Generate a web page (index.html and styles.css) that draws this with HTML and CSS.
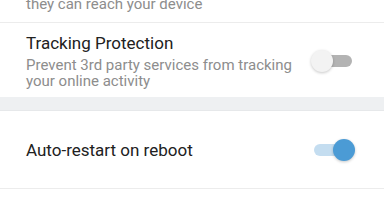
FILE: index.html
```html
<!DOCTYPE html>
<html>
<head>
<meta charset="utf-8">
<link rel="stylesheet" href="styles.css">
</head>
<body>
<div class="list">
  <div class="item partial">
    <div class="summary cut">they can reach your device</div>
  </div>
  <div class="item two-line">
    <div class="text">
      <div class="title">Tracking Protection</div>
      <div class="summary">Prevent 3rd party services from tracking<br>your online activity</div>
    </div>
    <div class="switch off"><span class="track"></span><span class="knob"></span></div>
  </div>
  <div class="band"></div>
  <div class="item single">
    <div class="text">
      <div class="title">Auto-restart on reboot</div>
    </div>
    <div class="switch on"><span class="track"></span><span class="knob"></span></div>
  </div>
</div>
</body>
</html>
```
FILE: styles.css
```css
html, body {
  margin: 0;
  padding: 0;
  background: #ffffff;
  font-family: Roboto, "Noto Sans", sans-serif;
  width: 384px;
  height: 216px;
  overflow: hidden;
}
.list {
  display: flex;
  flex-direction: column;
}
.item {
  display: flex;
  align-items: center;
  padding: 0 29px 0 26px;
  border-bottom: 1px solid #ececec;
}
.partial {
  height: 22px;
  align-items: flex-start;
  overflow: hidden;
}
.cut {
  margin-top: -4px;
}
.two-line {
  padding-top: 10px;
  padding-bottom: 8px;
  align-items: center;
  border-bottom: none;
}
.text {
  flex: 1;
  display: flex;
  flex-direction: column;
}
.title {
  font-size: 17px;
  line-height: 20px;
  color: #212121;
}
.summary {
  font-size: 15px;
  line-height: 16px;
  color: #8d8d8d;
}
.two-line .summary {
  margin-top: 4px;
}
.band {
  height: 13px;
  background: #eef0f2;
  border-bottom: 1px solid #e6e8ea;
}
.single {
  height: 77px;
}
.switch {
  position: relative;
  width: 44px;
  height: 22px;
  flex: none;
}
.track {
  position: absolute;
  left: 3px;
  right: 3px;
  top: 5px;
  height: 12px;
  border-radius: 6px;
}
.knob {
  position: absolute;
  top: 0;
  width: 22px;
  height: 22px;
  border-radius: 50%;
}
.off .track {
  background: #b3b3b3;
}
.off .knob {
  left: 0;
  background: #f3f3f3;
  box-shadow: 0 1px 3px rgba(0,0,0,0.22);
}
.on .track {
  background: #c4ddf0;
}
.on .knob {
  right: 0;
  background: #4b9bd5;
  box-shadow: 0 1px 3px rgba(0,0,0,0.22);
}
```
